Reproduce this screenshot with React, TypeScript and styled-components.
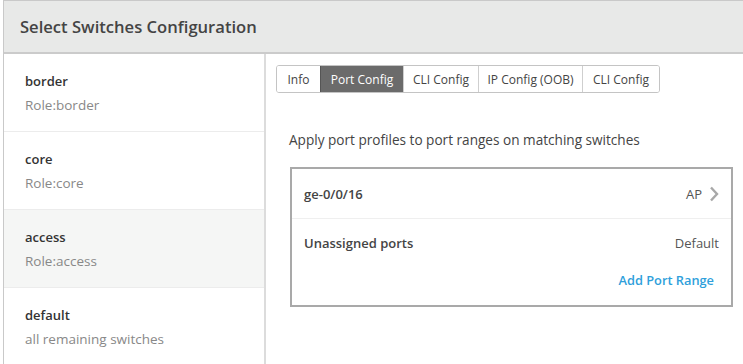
import React from "react";
import styled, { createGlobalStyle } from "styled-components";

const Global = createGlobalStyle`
  html, body { margin: 0; padding: 0; background: #ffffff; }
  body { font-family: "Open Sans", "Noto Sans", sans-serif; color: #333; }
`;

const Frame = styled.div`
  margin-left: 3px;
  width: 760px;
  height: 364px;
  border-left: 1px solid #c9c9c9;
  border-top: 1px solid #c9c9c9;
  display: flex;
  flex-direction: column;
  box-sizing: border-box;
  overflow: hidden;
`;

const Header = styled.div`
  height: 51px;
  flex: none;
  background: #e8e9e8;
  border-bottom: 2px solid #cbcbcb;
  display: flex;
  align-items: center;
  padding-left: 16px;
  font-size: 16.6px;
  font-weight: 600;
  color: #444;
`;

const Body = styled.div`
  flex: 1;
  display: grid;
  grid-template-columns: 262px 1fr;
  min-height: 0;
`;

const Sidebar = styled.div`
  border-right: 2px solid #dcdcdc;
  display: flex;
  flex-direction: column;
`;

const SideRow = styled.div<{ $selected?: boolean }>`
  height: 78px;
  flex: none;
  box-sizing: border-box;
  padding: 17px 0 0 21px;
  border-bottom: 1px solid #ececec;
  background: ${(p) => (p.$selected ? "#f5f6f5" : "#ffffff")};
`;

const SideTitle = styled.div`
  font-size: 13px;
  font-weight: 600;
  line-height: 20px;
  color: #333;
`;

const SideSub = styled.div`
  font-size: 13.5px;
  line-height: 20px;
  margin-top: 4px;
  color: #888;
`;

const Main = styled.div`
  padding: 11px 10px 0 10px;
  display: flex;
  flex-direction: column;
`;

const Tabs = styled.div`
  display: flex;
  align-self: flex-start;
  border: 1px solid #c4c4c4;
  border-radius: 3px;
  overflow: hidden;
  height: 28px;
  box-sizing: border-box;
`;

const Tab = styled.div<{ $active?: boolean; $w: number }>`
  width: ${(p) => p.$w}px;
  box-sizing: border-box;
  display: flex;
  align-items: center;
  justify-content: center;
  font-size: 12px;
  color: ${(p) => (p.$active ? "#ffffff" : "#444")};
  background: ${(p) => (p.$active ? "#6b6b6b" : "#ffffff")};
  border-left: 1px solid ${(p) => (p.$active ? "#555" : "#cfcfcf")};
  &:first-child { border-left: none; }
`;

const Content = styled.div`
  padding-left: 13px;
`;

const Description = styled.div`
  margin-top: 37px;
  font-size: 13.6px;
  line-height: 20px;
  color: #444;
`;

const PortBox = styled.div`
  margin-top: 17px;
  margin-left: 1px;
  width: 443px;
  height: 140px;
  box-sizing: border-box;
  border: 2px solid #a9a9a9;
  display: flex;
  flex-direction: column;
`;

const PortRow = styled.div<{ $divider?: boolean }>`
  height: ${(p) => (p.$divider ? 50 : 48)}px;
  flex: none;
  box-sizing: border-box;
  display: flex;
  align-items: center;
  justify-content: space-between;
  padding: 0 12px 0 12px;
  border-bottom: ${(p) => (p.$divider ? "1px solid #efefef" : "none")};
  font-size: 13px;
`;

const PortName = styled.span`
  font-weight: 600;
  color: #444;
`;

const PortValue = styled.span`
  display: flex;
  align-items: center;
  gap: 7px;
  color: #555;
`;

const Footer = styled.div`
  display: flex;
  justify-content: flex-end;
  padding: 4px 17px 0 0;
`;

const AddLink = styled.span`
  color: #2f9fdb;
  font-size: 12.8px;
  font-weight: 600;
  cursor: pointer;
`;

const Chevron = () => (
  <svg width="10" height="16" viewBox="0 0 10 16">
    <path d="M2 1.5 L8 8 L2 14.5" fill="none" stroke="#a8a8a8" strokeWidth="2.4" />
  </svg>
);

const groups = [
  { name: "border", sub: "Role:border" },
  { name: "core", sub: "Role:core" },
  { name: "access", sub: "Role:access", selected: true },
  { name: "default", sub: "all remaining switches" },
];

const tabs = [
  { label: "Info", w: 43 },
  { label: "Port Config", w: 83, active: true },
  { label: "CLI Config", w: 75 },
  { label: "IP Config (OOB)", w: 104 },
  { label: "CLI Config", w: 77 },
];

export default function App() {
  return (
    <>
      <Global />
      <Frame>
        <Header>Select Switches Configuration</Header>
        <Body>
          <Sidebar>
            {groups.map((g) => (
              <SideRow key={g.name} $selected={g.selected}>
                <SideTitle>{g.name}</SideTitle>
                <SideSub>{g.sub}</SideSub>
              </SideRow>
            ))}
          </Sidebar>
          <Main>
            <Tabs>
              {tabs.map((t, i) => (
                <Tab key={i} $active={t.active} $w={t.w}>
                  {t.label}
                </Tab>
              ))}
            </Tabs>
            <Content>
              <Description>Apply port profiles to port ranges on matching switches</Description>
              <PortBox>
                <PortRow $divider>
                  <PortName>ge-0/0/16</PortName>
                  <PortValue>
                    AP <Chevron />
                  </PortValue>
                </PortRow>
                <PortRow>
                  <PortName>Unassigned ports</PortName>
                  <PortValue>Default</PortValue>
                </PortRow>
                <Footer>
                  <AddLink>Add Port Range</AddLink>
                </Footer>
              </PortBox>
            </Content>
          </Main>
        </Body>
      </Frame>
    </>
  );
}
